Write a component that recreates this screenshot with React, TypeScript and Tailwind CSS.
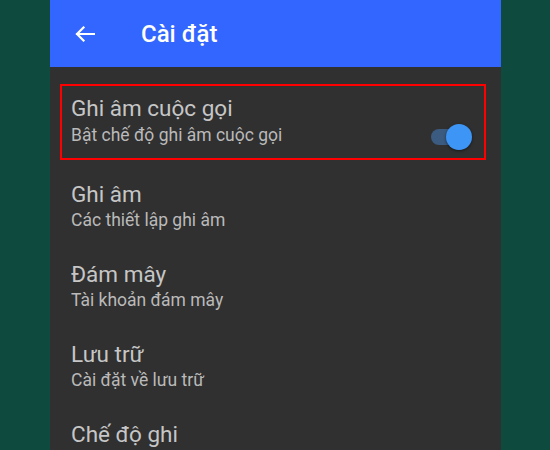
export default function App() {
  const rows = [
    { title: "Ghi âm", sub: "Các thiết lập ghi âm" },
    { title: "Đám mây", sub: "Tài khoản đám mây" },
    { title: "Lưu trữ", sub: "Cài đặt về lưu trữ" },
    { title: "Chế độ ghi", sub: "Tự động ghi âm" },
  ];

  return (
    <div
      className="flex h-[450px] w-[550px] overflow-hidden bg-[#0f4a3e] pl-[50px]"
      style={{ fontFamily: "Roboto, 'Noto Sans', sans-serif" }}
    >
      <div className="flex w-[451px] flex-col bg-[#303030]">
        {/* HEADER */}
        <div className="flex h-[67px] shrink-0 items-center bg-[#3366ff] pl-[25px]">
          <svg width="20" height="16" viewBox="0 0 20 16" fill="none">
            <path
              d="M19 8H2M8.5 1.5L2 8l6.5 6.5"
              stroke="white"
              strokeWidth="2.2"
              strokeLinecap="square"
            />
          </svg>
          <h1 className="ml-[46px] text-[24px] font-medium leading-none text-white">
            Cài đặt
          </h1>
        </div>

        {/* SETTINGS */}
        <div className="pt-[17px]">
          <div className="ml-[10px] mr-[15px] flex items-end justify-between border-2 border-[#ff0000] pb-[13px] pl-[9px] pr-[12px] pt-[10px]">
            <div>
              <p className="text-[22.5px] leading-[25px] text-[#c6c6c6]">
                Ghi âm cuộc gọi
              </p>
              <p className="mt-[4px] text-[17.5px] leading-[20px] text-[#bababa]">
                Bật chế độ ghi âm cuộc gọi
              </p>
            </div>

            <div className="relative mb-[-5px] h-[26px] w-[41px]">
              <div className="absolute left-0 top-[5px] h-[16px] w-[34px] rounded-full bg-[#3b5b80]" />
              <div className="absolute right-0 top-0 h-[26px] w-[26px] rounded-full bg-[#3d95f5] shadow-[0_1px_3px_rgba(0,0,0,0.5)]" />
            </div>
          </div>

          <div className="mt-[22px] pl-[21px]">
            {rows.map((row) => (
              <div key={row.title} className="pb-[32px]">
                <p className="text-[22.5px] leading-[25px] text-[#c6c6c6]">
                  {row.title}
                </p>
                <p className="mt-[3px] text-[17.5px] leading-[20px] text-[#bababa]">
                  {row.sub}
                </p>
              </div>
            ))}
          </div>
        </div>
      </div>
    </div>
  );
}
